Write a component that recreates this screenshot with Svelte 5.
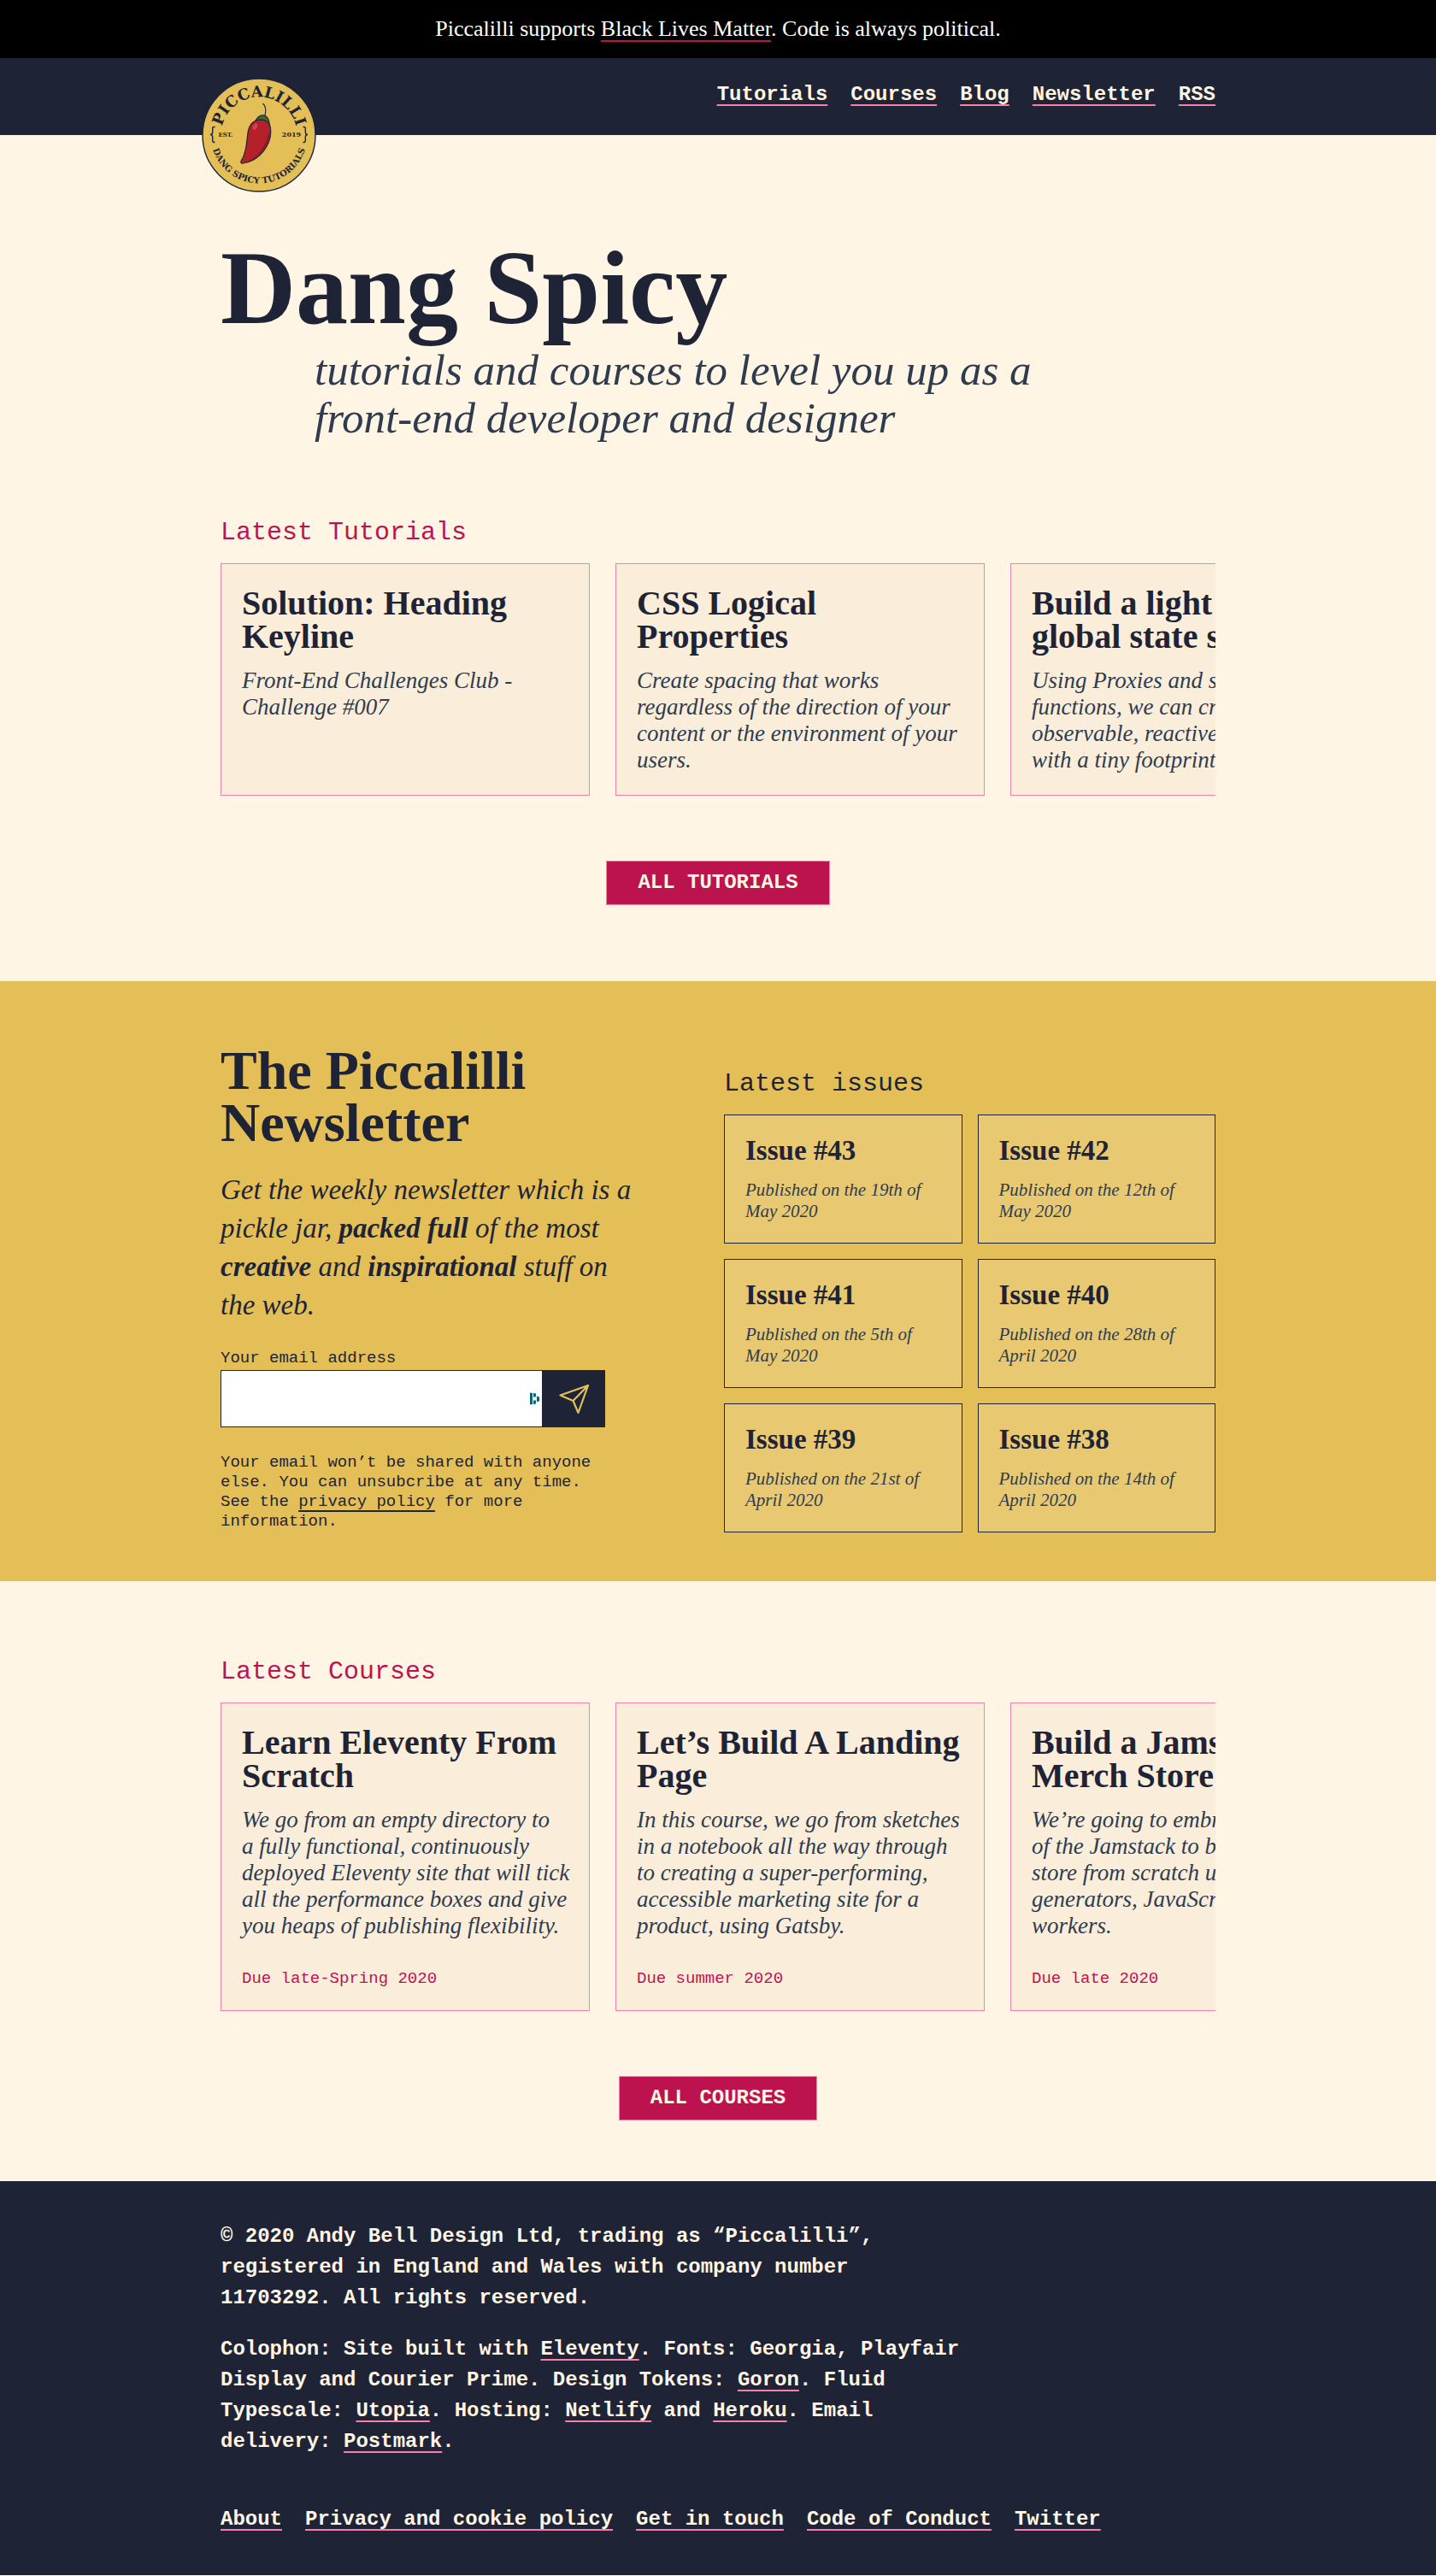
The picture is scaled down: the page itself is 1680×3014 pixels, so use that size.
<script>
  const nav = ['Tutorials', 'Courses', 'Blog', 'Newsletter', 'RSS'];

  const tutorials = [
    { title: 'Solution: Heading Keyline', text: 'Front-End Challenges Club - Challenge #007' },
    {
      title: 'CSS Logical Properties',
      text: 'Create spacing that works regardless of the direction of your content or the environment of your users.'
    },
    {
      title: 'Build a light and global state system',
      text: 'Using Proxies and subscribed functions, we can create an observable, reactive global state with a tiny footprint.'
    }
  ];

  const courses = [
    {
      title: 'Learn Eleventy From Scratch',
      text: 'We go from an empty directory to a\u00a0fully functional, continuously deployed Eleventy site that will tick all the performance boxes and give you heaps of publishing flexibility.',
      due: 'Due late-Spring 2020'
    },
    {
      title: 'Let’s Build A Landing Page',
      text: 'In this course, we go from sketches in a notebook all the way through to\u00a0creating a super-performing, accessible marketing site for a product, using Gatsby.',
      due: 'Due summer 2020'
    },
    {
      title: 'Build a Jamstack Merch Store',
      text: 'We’re going to embrace the power of the Jamstack to build a merch store from scratch using static generators, JavaScript and cloud workers.',
      due: 'Due late 2020'
    }
  ];

  const issues = [
    { no: 43, date: '19th of May 2020' },
    { no: 42, date: '12th of May 2020' },
    { no: 41, date: '5th of May 2020' },
    { no: 40, date: '28th of April 2020' },
    { no: 39, date: '21st of April 2020' },
    { no: 38, date: '14th of April 2020' }
  ];

  const footerLinks = ['About', 'Privacy and cookie policy', 'Get in touch', 'Code of Conduct', 'Twitter'];
</script>

{#snippet cards(items)}
  <ul class="cards">
    {#each items as item}
      <li class="card">
        <h3>{item.title}</h3>
        <p>{item.text}</p>
        {#if item.due}<span class="due">{item.due}</span>{/if}
      </li>
    {/each}
  </ul>
{/snippet}

<aside class="banner">
  Piccalilli supports <a href="#blm">Black Lives Matter</a>. Code is always political.
</aside>

<header class="site-head">
  <div class="wrap head-inner">
    <a class="logo" href="#home" aria-label="Piccalilli home">
      <svg viewBox="0 0 134 134" aria-hidden="true">
        <defs>
          <path id="arc-top" d="M22.5 67 A44.5 44.5 0 0 1 111.5 67" />
          <path id="arc-bottom" d="M10.5 67 A56.5 56.5 0 0 0 123.5 67" />
        </defs>
        <circle cx="67" cy="67" r="66" fill="#e4bf58" stroke="#1e2435" stroke-width="1.4" />
        <g fill="#1e2435" font-family="'DejaVu Serif', serif" font-weight="700" text-anchor="middle">
          <text font-size="18"><textPath href="#arc-top" startOffset="50%">PICCALILLI</textPath></text>
          <text font-size="10"><textPath href="#arc-bottom" startOffset="50%">DANG SPICY TUTORIALS</textPath></text>
          <text x="28" y="69" font-size="7">EST.</text>
          <text x="105" y="69" font-size="8">2019</text>
        </g>
        <g fill="none" stroke="#1e2435" stroke-width="1.4">
          <path d="M15.5 57.5 Q12.5 57 12.7 60 V63.5 Q12.7 66.5 10 66.5 Q12.7 66.5 12.7 69.5 V73 Q12.5 76 15.5 75.5" />
          <path d="M118.5 57.5 Q121.5 57 121.3 60 V63.5 Q121.3 66.5 124 66.5 Q121.3 66.5 121.3 69.5 V73 Q121.5 76 118.5 75.5" />
        </g>
        <path
          d="M60 52 C55 56 54 62 53.5 68 C52.5 80 51 90 46.5 96.5 C45 99 46 100.5 48.500 100 C63 98 76 86 80 70 C82 61 80 54 77 51 C72 48 65 48 60 52Z"
          fill="#b5212b" stroke="#1e2435" stroke-width="1.2" />
        <path d="M80 62 C79 80 66 94 50 99 C64 94 74 82 77 68Z" fill="#8f1722" />
        <ellipse cx="62.5" cy="57" rx="2.5" ry="4" transform="rotate(28 62.5 57)" fill="#d0454f" />
        <path d="M63 50 C65 45 71 42 75 45 C78 47 79 51 79 54 C75 49 69 48 63 50Z" fill="#3c6b2a" stroke="#1e2435" stroke-width="1.1" />
        <path d="M71.5 30 C75 33 75.5 38 74 44" fill="none" stroke="#1e2435" stroke-width="1.2" />
      </svg>
    </a>
    <nav aria-label="Primary">
      {#each nav as item}<a href="#{item}">{item}</a>{/each}
    </nav>
  </div>
</header>

<main>
  <section class="wrap hero">
    <h1>Dang Spicy</h1>
    <p>tutorials and courses to level you up as a front-end developer and designer</p>
  </section>

  <section class="wrap feed">
    <h2 class="kicker">Latest Tutorials</h2>
    {@render cards(tutorials)}
    <a class="button" href="#tutorials">ALL TUTORIALS</a>
  </section>

  <section class="newsletter">
    <div class="wrap news-grid">
      <div>
        <h2>The Piccalilli Newsletter</h2>
        <p class="lede">
          Get the weekly newsletter which is a pickle jar, <strong>packed full</strong> of the most
          <strong>creative</strong> and <strong>inspirational</strong> stuff on the web.
        </p>
        <form>
          <label for="email">Your email address</label>
          <div class="field">
            <div class="box">
              <input id="email" type="email" />
              <svg class="badge" viewBox="0 0 11 15" aria-hidden="true">
                <path d="M0 .5 L3 1 V14 L0 14.5Z M4 1 L7 1.5 V5.5 H4Z M4 9.5 H7 V13.5 L4 14Z M8 4.5 L11 5.5 V10.5 L8 11Z" fill="#0e6377" />
              </svg>
            </div>
            <button type="submit" aria-label="Subscribe">
              <svg viewBox="0 0 36 36" aria-hidden="true">
                <path d="M1.500 13.5 L34 2 L22.5 34 L16.5 20Z M16.5 20 L34 2" fill="none" stroke="#e4bf58" stroke-width="2.2" stroke-linejoin="round" />
              </svg>
            </button>
          </div>
          <p class="note">
            Your email won’t be shared with anyone else. You can unsubcribe at any time. See the
            <a href="#privacy">privacy policy</a> for more information.
          </p>
        </form>
      </div>
      <div class="issues">
        <h3 class="kicker">Latest issues</h3>
        <ul>
          {#each issues as issue}
            <li>
              <h4>Issue #{issue.no}</h4>
              <p>Published on the {issue.date}</p>
            </li>
          {/each}
        </ul>
      </div>
    </div>
  </section>

  <section class="wrap feed courses">
    <h2 class="kicker">Latest Courses</h2>
    {@render cards(courses)}
    <a class="button" href="#courses">ALL COURSES</a>
  </section>
</main>

<footer>
  <div class="wrap">
    <p>
      © 2020 Andy Bell Design Ltd, trading as “Piccalilli”, registered in England and Wales with
      company number 11703292. All rights reserved.
    </p>
    <p>
      Colophon: Site built with <a href="#eleventy">Eleventy</a>. Fonts: Georgia, Playfair Display and
      Courier Prime. Design Tokens: <a href="#goron">Goron</a>. Fluid Typescale:
      <a href="#utopia">Utopia</a>. Hosting: <a href="#netlify">Netlify</a> and
      <a href="#heroku">Heroku</a>. Email delivery: <a href="#postmark">Postmark</a>.
    </p>
    <nav aria-label="Footer">
      {#each footerLinks as item}<a href="#{item}">{item}</a>{/each}
    </nav>
  </div>
</footer>

<style>
  :global(body) {
    background: #fff5e4;
    color: #1e2435;
    font-family: 'Liberation Serif', Georgia, serif;
  }
  h1, h2, h3, h4, p, ul { margin: 0; padding: 0; }
  ul { list-style: none; }
  a { color: inherit; text-decoration-thickness: 2px; text-underline-offset: 5px; }

  .wrap { max-width: 1164px; margin: 0 auto; }

  .banner {
    padding: 16px 0;
    background: #000;
    color: #fff;
    font-size: 26px;
    line-height: 36px;
    text-align: center;
  }
  .banner a { text-decoration-color: #bc134f; }

  .site-head { background: #1e2435; }
  .head-inner { position: relative; padding: 25px 0 29px; }
  .logo { position: absolute; left: -22px; top: 23px; width: 134px; }
  .logo svg { display: block; overflow: visible; }
  nav {
    display: flex;
    flex-wrap: wrap;
    gap: 0 27px;
    color: #fff5e4;
    font: 700 24px/36px 'Liberation Mono', 'Courier New', monospace;
  }
  nav a, footer a { text-decoration-color: #f77fac; }
  .site-head nav { justify-content: flex-end; }

  .hero { padding-top: 118px; }
  h1 { font-size: 122px; line-height: 121px; }
  .hero p {
    max-width: 880px;
    margin: 8px 0 0 110px;
    color: #2f3c50;
    font-size: 51px;
    font-style: italic;
    line-height: 56px;
  }

  .feed { padding: 88px 0 89px; }
  .courses { padding-bottom: 71px; }
  .kicker { font: 400 30px/36px 'Liberation Mono', 'Courier New', monospace; }
  .feed .kicker { color: #bc134f; }
  .cards {
    display: flex;
    gap: 30px;
    margin-top: 18px;
    overflow-x: auto;
    scrollbar-width: none;
  }
  .card {
    box-sizing: border-box;
    flex: 0 0 432px;
    padding: 26px 22px 25px 24px;
    border: 1px solid #f77fac;
    background: #faeedb;
  }
  .card h3 { font-size: 40px; line-height: 39px; }
  .card p {
    margin-top: 17px;
    color: #2f3c50;
    font-size: 27px;
    font-style: italic;
    line-height: 31px;
  }
  .due {
    display: block;
    margin-top: 34px;
    color: #bc134f;
    font: 400 19px/24px 'Liberation Mono', 'Courier New', monospace;
  }
  .button {
    display: block;
    width: fit-content;
    margin: 76px auto 0;
    padding: 10px 36px;
    border: 1px solid #f77fac;
    background: #bc134f;
    color: #fff5e4;
    font: 700 24px/30px 'Liberation Mono', 'Courier New', monospace;
    text-decoration: none;
  }

  .newsletter { padding: 74px 0 57px; background: #e4bf58; }
  .news-grid { display: grid; grid-template-columns: 1fr 1fr; gap: 14px; }
  .newsletter h2 { max-width: 450px; font-size: 64px; line-height: 61px; }
  .lede {
    max-width: 490px;
    margin-top: 26px;
    font-size: 33px;
    font-style: italic;
    line-height: 45px;
  }
  form {
    max-width: 450px;
    margin-top: 28px;
    font: 400 19px/23px 'Liberation Mono', 'Courier New', monospace;
  }
  label { display: block; }
  .field { display: flex; height: 67px; margin-top: 2px; }
  .box { position: relative; flex: 1; }
  input {
    box-sizing: border-box;
    width: 100%;
    height: 100%;
    padding: 0 30px 0 12px;
    border: 1px solid #1e2435;
    border-radius: 0;
    background: #fff;
    font: inherit;
  }
  .badge { position: absolute; right: 4px; top: 26px; width: 11px; height: 15px; }
  .field button {
    display: grid;
    place-items: center;
    width: 73px;
    padding: 0;
    border: 0;
    background: #1e2435;
  }
  .field button svg { width: 36px; height: 36px; }
  .note { margin-top: 30px; }

  .newsletter .issues { padding-top: 28px; }
  .issues ul {
    display: grid;
    grid-template-columns: 1fr 1fr;
    gap: 18px;
    margin-top: 18px;
  }
  .issues li {
    padding: 25px 24px 24px;
    border: 1px solid #1e2435;
    background: #e8c972;
  }
  h4 { font-size: 33px; line-height: 32px; }
  .issues p {
    margin-top: 18px;
    color: #2f3c50;
    font-size: 21px;
    font-style: italic;
    line-height: 25px;
  }

  footer {
    padding: 47px 0;
    background: #1e2435;
    color: #fff5e4;
    font: 700 24px/36px 'Liberation Mono', 'Courier New', monospace;
  }
  footer p { max-width: 870px; margin-bottom: 24px; }
  footer nav { margin-top: 55px; }
</style>
